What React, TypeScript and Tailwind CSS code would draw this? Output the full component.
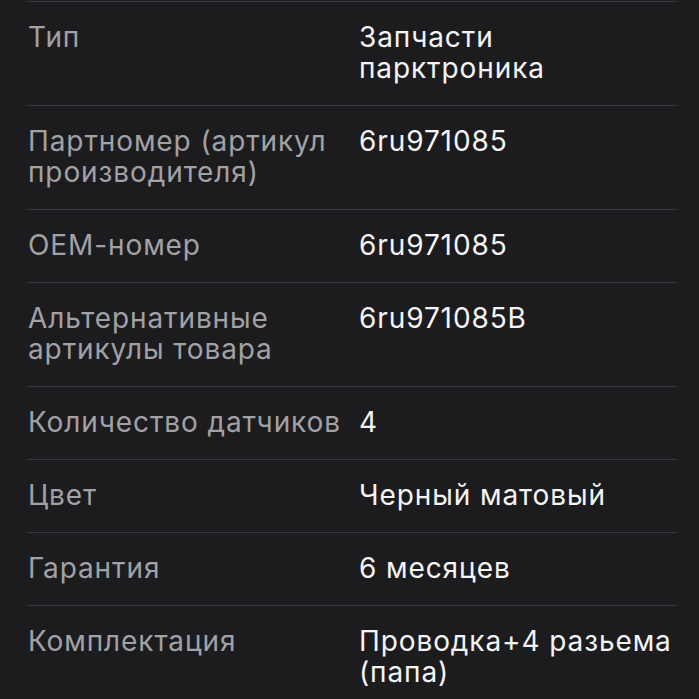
import React from "react";

const rows: [string, string][] = [
  ["Тип", "Запчасти парктроника"],
  ["Партномер (артикул производителя)", "6ru971085"],
  ["OEM-номер", "6ru971085"],
  ["Альтернативные артикулы товара", "6ru971085B"],
  ["Количество датчиков", "4"],
  ["Цвет", "Черный матовый"],
  ["Гарантия", "6 месяцев"],
  ["Комплектация", "Проводка+4 разьема (папа)"],
];

export default function App() {
  return (
    <div
      className="w-[699px] h-[699px] overflow-hidden bg-[#1c1c1f] pt-[1px] pl-[27px] pr-[22px]"
      style={{ fontFamily: "Inter, 'Noto Sans', sans-serif" }}
    >
      {rows.map(([k, v], i) => (
        <div key={i} className="flex border-t-[1.5px] border-[#38383c] pt-[20px] pb-[21px] text-[28px] leading-[31px] tracking-[0.9px]">
          <div className="w-[332px] shrink-0 pl-[1px] text-[#a1a1a6]">{k}</div>
          <div className="flex-1 text-[#f4f4f5]">{v}</div>
        </div>
      ))}
    </div>
  );
}
